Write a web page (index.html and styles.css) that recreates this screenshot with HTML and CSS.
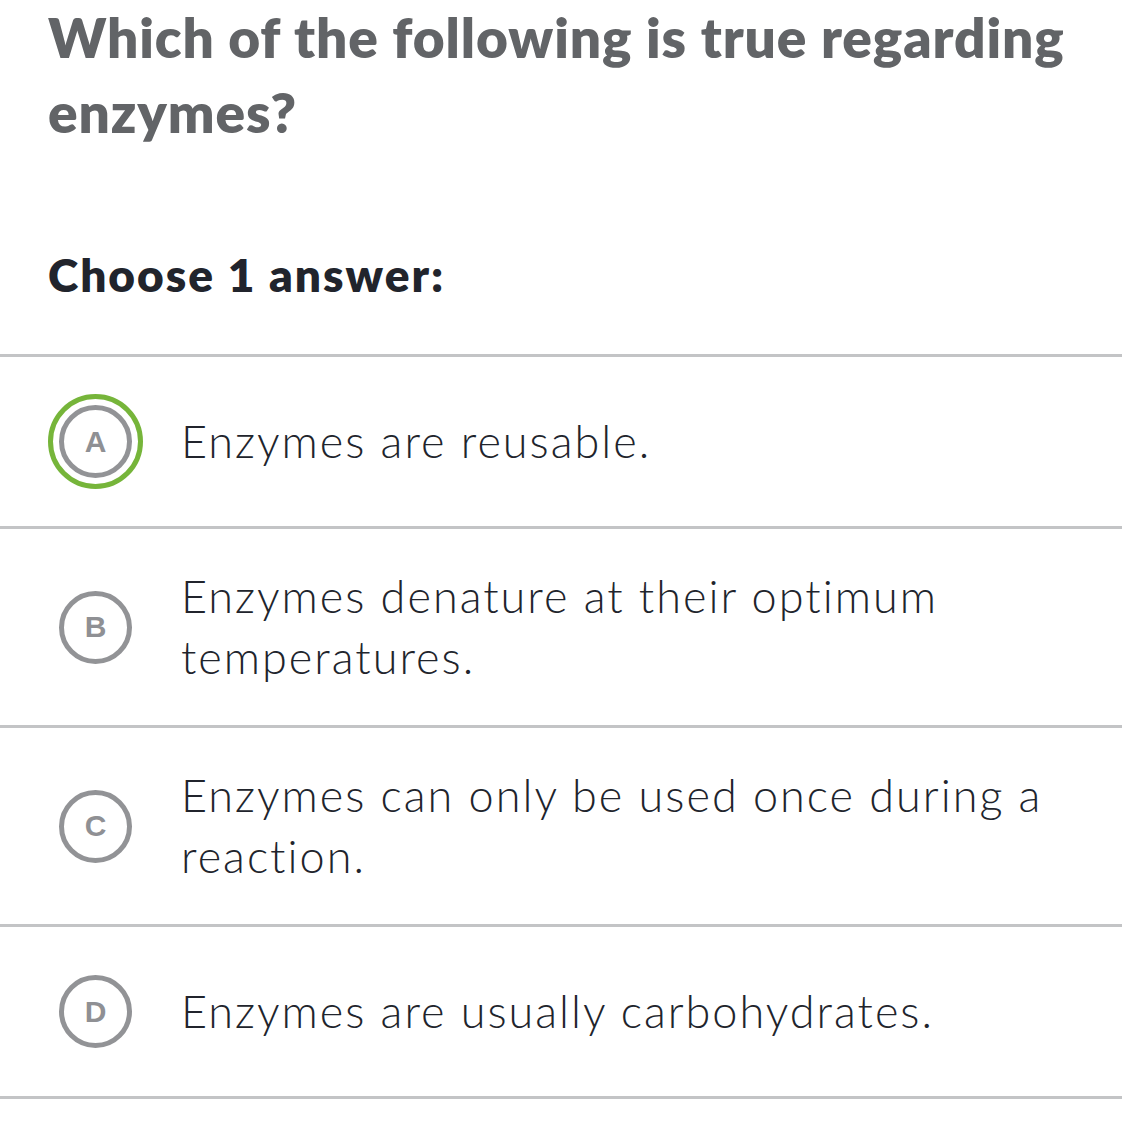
FILE: index.html
```html
<!DOCTYPE html>
<html>
<head>
<meta charset="utf-8">
<link rel="stylesheet" href="styles.css">
</head>
<body>
<div class="page">
  <h1 class="question">Which of the following is true regarding enzymes?</h1>
  <div class="prompt">Choose 1 answer:</div>
  <ul class="choices">
    <li class="choice selected">
      <span class="ring"><span class="badge">A</span></span>
      <span class="text">Enzymes are reusable.</span>
    </li>
    <li class="choice">
      <span class="ring"><span class="badge">B</span></span>
      <span class="text">Enzymes denature at their optimum temperatures.</span>
    </li>
    <li class="choice">
      <span class="ring"><span class="badge">C</span></span>
      <span class="text">Enzymes can only be used once during a reaction.</span>
    </li>
    <li class="choice">
      <span class="ring"><span class="badge">D</span></span>
      <span class="text">Enzymes are usually carbohydrates.</span>
    </li>
  </ul>
</div>
</body>
</html>
```
FILE: styles.css
```css
html, body {
  margin: 0;
  padding: 0;
  background: #ffffff;
}
.page {
  font-family: Lato, "Open Sans", sans-serif;
}
.question {
  margin: 0;
  padding: 0 20px 0 48px;
  font-size: 55px;
  font-weight: 800;
  line-height: 75px;
  letter-spacing: 0.9px;
  color: #626467;
}
.prompt {
  margin: 0;
  padding: 100px 48px 0 48px;
  font-size: 46px;
  font-weight: 800;
  line-height: 50px;
  letter-spacing: 2px;
  color: #21242c;
  height: 104px;
}
.choices {
  list-style: none;
  margin: 0;
  padding: 0;
  border-top: 3px solid #c3c4c6;
}
.choice {
  display: flex;
  align-items: center;
  gap: 38px;
  padding: 37px 48px;
  border-bottom: 3px solid #c3c4c6;
}
.ring {
  flex: none;
  width: 95px;
  height: 95px;
  box-sizing: border-box;
  border-radius: 50%;
  border: 5px solid transparent;
  display: flex;
  align-items: center;
  justify-content: center;
}
.selected .ring {
  border-color: #76b53a;
}
.badge {
  width: 73px;
  height: 73px;
  box-sizing: border-box;
  border-radius: 50%;
  border: 5px solid #929396;
  display: flex;
  align-items: center;
  justify-content: center;
  font-size: 30px;
  font-weight: 700;
  color: #8f9094;
  font-family: "Liberation Sans", Arial, sans-serif;
}
.text {
  font-size: 45px;
  font-weight: 300;
  line-height: 61px;
  letter-spacing: 2px;
  color: #21242c;
}
```
